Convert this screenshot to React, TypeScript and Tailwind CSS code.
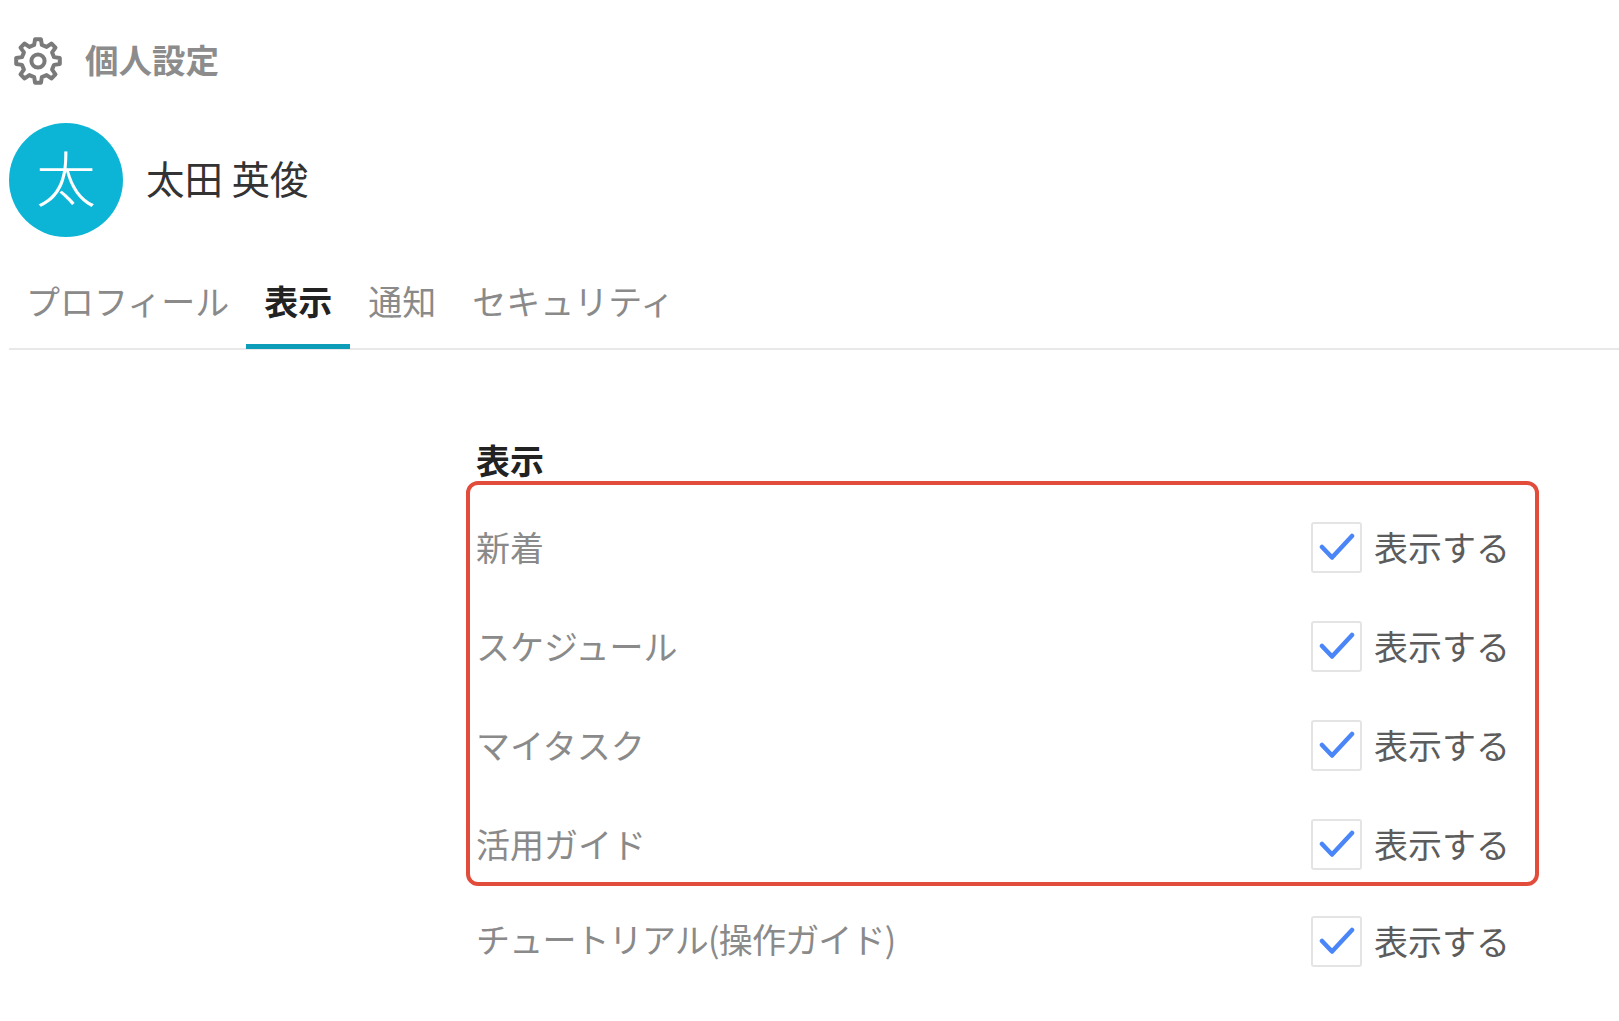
const FONT = "font-['Noto_Sans_CJK_JP','Noto_Sans',sans-serif]";

const rows = ["新着", "スケジュール", "マイタスク", "活用ガイド", "チュートリアル(操作ガイド)"];

function gearPath() {
  const cx = 24;
  const cy = 24;
  const teeth = 8;
  const outer = 22;
  const root = 16.5;
  const pts: string[] = [];
  for (let i = 0; i < teeth; i++) {
    const a = (i * 2 * Math.PI) / teeth - Math.PI / 2;
    const step = (2 * Math.PI) / teeth;
    const angles: [number, number][] = [
      [a - step * 0.3, root],
      [a - step * 0.17, outer],
      [a + step * 0.17, outer],
      [a + step * 0.3, root],
    ];
    for (const [t, r] of angles) {
      pts.push(`${(cx + r * Math.cos(t)).toFixed(2)} ${(cy + r * Math.sin(t)).toFixed(2)}`);
    }
  }
  return `M${pts.join(" L")} Z`;
}

function Gear() {
  return (
    <svg width="48" height="48" viewBox="0 0 48 48" fill="none" className="shrink-0">
      <path d={gearPath()} stroke="#7a7a7a" strokeWidth="4" strokeLinejoin="round" />
      <circle cx="24" cy="24" r="6.6" stroke="#7a7a7a" strokeWidth="4" />
    </svg>
  );
}

function Row({ label, last }: { label: string; last?: boolean }) {
  return (
    <div className={`${last ? "h-[95px]" : "h-[99px]"} flex items-center justify-between`}>
      <span className={`text-[34px] leading-[40px] text-[#8a8a8a] ${last ? "mb-[4px] tracking-[-0.8px]" : ""}`}>{label}</span>
      <div className="flex items-center gap-[12px]">
        <span className="w-[51px] h-[51px] mt-[1px] rounded-[3px] border-2 border-[#e4e4e4] bg-white flex items-center justify-center">
          <svg width="36" height="28" viewBox="0 0 36 28" fill="none">
            <path d="M3 14 L13 24.5 L33 3" stroke="#4a86f7" strokeWidth="4.5" strokeLinecap="round" strokeLinejoin="round" />
          </svg>
        </span>
        <span className="text-[34px] leading-[40px] text-[#5c5c5c]">表示する</span>
      </div>
    </div>
  );
}

export default function App() {
  return (
    <div className={`w-[1619px] h-[1021px] bg-white overflow-hidden ${FONT}`}>
      <div className="pl-[14px] pt-[37px] h-[123px] flex items-start gap-[23px]">
        <Gear />
        <span className="text-[33.5px] leading-[44px] font-bold text-[#8c8c8c]">個人設定</span>
      </div>
      <div className="pl-[9px] flex items-center gap-[23px]">
        <div className="w-[114px] h-[114px] rounded-full bg-[#0cb5d6] flex items-center justify-center text-white text-[60px] leading-none font-light pb-[8px]">
          太
        </div>
        <span className="text-[38.5px] leading-[48px] text-[#333333] mb-[7px]">太田 英俊</span>
      </div>
      <div className="ml-[9px] mt-[28px] h-[85px] border-b-2 border-[#e8e8e8] flex items-stretch">
        <div className="px-[17px] pt-[12px] text-[34px] leading-[48px] text-[#8a8a8a]">プロフィール</div>
        <div className="relative px-[18px] pt-[12px] text-[34px] leading-[48px] font-bold text-[#222222]">
          表示
          <span className="absolute left-0 right-0 bottom-[-1px] h-[5px] bg-[#0d9db8]" />
        </div>
        <div className="px-[18px] pt-[12px] text-[34px] leading-[48px] text-[#8a8a8a]">通知</div>
        <div className="px-[18px] pt-[12px] text-[34px] leading-[48px] text-[#8a8a8a]">セキュリティ</div>
      </div>
      <div className="ml-[476px] w-[1034px] mt-[90px]">
        <div className="text-[34px] leading-[40px] font-bold text-[#222222]">表示</div>
        <div className="relative mt-[1px]">
          <div className="absolute left-[-10px] right-[-29px] top-0 h-[405px] border-[4px] border-[#e24c3a] rounded-[12px] pointer-events-none" />
          <div className="pt-[16px]">
            {rows.map((r, i) => (
              <Row key={r} label={r} last={i === 4} />
            ))}
          </div>
        </div>
      </div>
    </div>
  );
}
